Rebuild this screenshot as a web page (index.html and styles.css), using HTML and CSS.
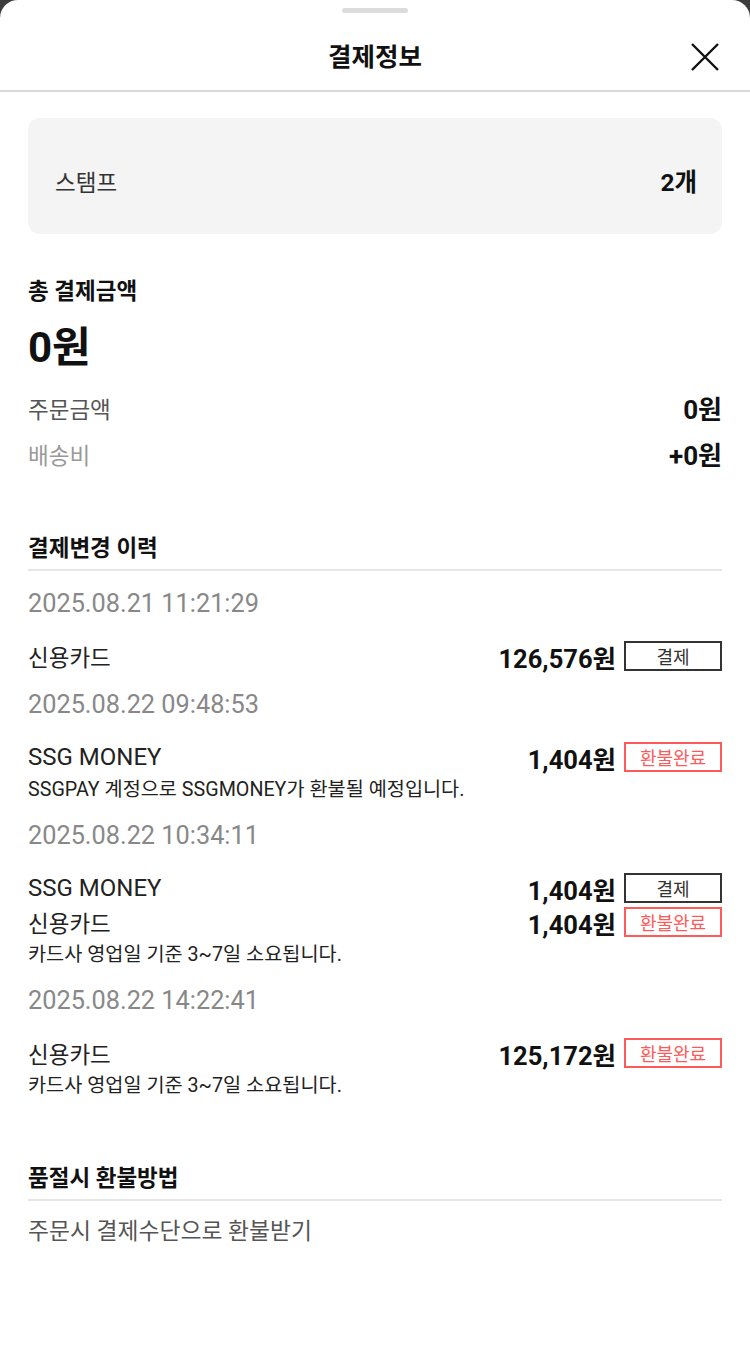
FILE: index.html
```html
<!DOCTYPE html>
<html lang="ko">
<head>
<meta charset="utf-8">
<link rel="stylesheet" href="styles.css">
</head>
<body>
<div class="sheet">
  <header class="header">
    <div class="handle"></div>
    <div class="title-row">
      <h1 class="title">결제정보</h1>
      <button class="close" aria-label="닫기">
        <svg width="28" height="28" viewBox="0 0 28 28"><path d="M1 1 L27 27 M27 1 L1 27" stroke="#111" stroke-width="2.4" fill="none"/></svg>
      </button>
    </div>
  </header>
  <main class="content">
    <div class="stamp-box">
      <span class="stamp-label">스탬프</span>
      <span class="stamp-value">2개</span>
    </div>

    <h2 class="section-title">총 결제금액</h2>
    <div class="total">0원</div>
    <div class="sum-row">
      <span class="sum-label">주문금액</span>
      <span class="sum-value">0원</span>
    </div>
    <div class="sum-row">
      <span class="sum-label light">배송비</span>
      <span class="sum-value">+0원</span>
    </div>

    <h2 class="section-title lined history-title">결제변경 이력</h2>
    <div class="history">
      <div class="group">
        <div class="date">2025.08.21 11:21:29</div>
        <div class="rows">
          <div class="row">
            <span class="method">신용카드</span>
            <span class="amount-wrap"><span class="amount">126,576원</span><span class="badge">결제</span></span>
          </div>
        </div>
      </div>
      <div class="group">
        <div class="date">2025.08.22 09:48:53</div>
        <div class="rows">
          <div class="row">
            <span class="method latin">SSG MONEY</span>
            <span class="amount-wrap"><span class="amount">1,404원</span><span class="badge refund">환불완료</span></span>
          </div>
        </div>
        <p class="desc">SSGPAY 계정으로 SSGMONEY가 환불될 예정입니다.</p>
      </div>
      <div class="group">
        <div class="date">2025.08.22 10:34:11</div>
        <div class="rows">
          <div class="row">
            <span class="method latin">SSG MONEY</span>
            <span class="amount-wrap"><span class="amount">1,404원</span><span class="badge">결제</span></span>
          </div>
          <div class="row">
            <span class="method">신용카드</span>
            <span class="amount-wrap"><span class="amount">1,404원</span><span class="badge refund">환불완료</span></span>
          </div>
        </div>
        <p class="desc">카드사 영업일 기준 3~7일 소요됩니다.</p>
      </div>
      <div class="group">
        <div class="date">2025.08.22 14:22:41</div>
        <div class="rows">
          <div class="row">
            <span class="method">신용카드</span>
            <span class="amount-wrap"><span class="amount">125,172원</span><span class="badge refund">환불완료</span></span>
          </div>
        </div>
        <p class="desc">카드사 영업일 기준 3~7일 소요됩니다.</p>
      </div>
    </div>

    <h2 class="section-title lined refund-title">품절시 환불방법</h2>
    <p class="refund-text">주문시 결제수단으로 환불받기</p>
  </main>
</div>
</body>
</html>
```

FILE: styles.css
```css
* { box-sizing: border-box; }
html, body {
  margin: 0;
  padding: 0;
  height: 100%;
  background: #3d3d3d;
}
body {
  font-family: Roboto, "Noto Sans CJK KR", sans-serif;
  color: #111;
}
.sheet {
  background: #fff;
  min-height: 100%;
  border-radius: 18px 18px 0 0;
}
.header {
  border-bottom: 2px solid #d6dadd;
  padding-top: 8px;
}
.handle {
  width: 66px;
  height: 5px;
  border-radius: 3px;
  background: #dcdcdc;
  margin: 0 auto;
}
.title-row {
  position: relative;
  height: 69px;
  margin-top: 8px;
  display: flex;
  align-items: center;
  justify-content: center;
}
.title {
  margin: 0;
  font-size: 25.5px;
  font-weight: 700;
  line-height: 30px;
  margin-top: 2px;
}
.close {
  position: absolute;
  right: 31px;
  top: 22px;
  width: 28px;
  height: 28px;
  padding: 0;
  border: 0;
  background: none;
  display: block;
}
.close svg { display: block; }
.content {
  padding: 26px 28px 40px;
}
.stamp-box {
  background: #f4f4f4;
  border-radius: 12px;
  height: 116px;
  padding: 50px 25px 36px 27px;
  display: flex;
  justify-content: space-between;
  align-items: center;
}
.stamp-label {
  font-size: 22.5px;
  color: #333;
  line-height: 30px;
}
.stamp-value {
  font-size: 24.5px;
  font-weight: 700;
  line-height: 30px;
}
.section-title {
  margin: 42px 0 0;
  font-size: 22.5px;
  font-weight: 700;
  line-height: 30px;
}
.total {
  margin-top: 17px;
  font-size: 42px;
  font-weight: 700;
  line-height: 50px;
}
.sum-row {
  margin-top: 16px;
  display: flex;
  justify-content: space-between;
  align-items: center;
  line-height: 30px;
}
.total + .sum-row { margin-top: 22px; }
.sum-label {
  font-size: 22.5px;
  color: #555;
}
.sum-label.light { color: #999; }
.sum-value {
  font-size: 26px;
  font-weight: 700;
}
.lined {
  border-bottom: 2px solid #e6e6e6;
  padding-bottom: 6px;
}
.history-title { margin-top: 62px; }
.group { margin-top: 17px; }
.group:first-child { margin-top: 16px; }
.date {
  font-size: 25.3px;
  line-height: 34px;
  color: #888;
}
.rows {
  margin-top: 20px;
  display: flex;
  flex-direction: column;
  gap: 4px;
}
.row {
  display: flex;
  justify-content: space-between;
  align-items: center;
  height: 30px;
}
.method {
  font-size: 22.5px;
  color: #222;
}
.method.latin { font-size: 24px; }
.amount-wrap {
  display: flex;
  align-items: center;
  gap: 8px;
}
.amount {
  font-size: 25.5px;
  font-weight: 700;
}
.badge {
  width: 98px;
  height: 30px;
  border: 2px solid #333;
  display: flex;
  align-items: center;
  justify-content: center;
  font-size: 18px;
  color: #333;
}
.badge.refund {
  border-color: #ff5a5a;
  color: #ff5a5a;
}
.desc {
  margin: 6px 0 0;
  font-size: 19.7px;
  line-height: 24px;
  color: #222;
}
.refund-title { margin-top: 65px; }
.refund-text {
  margin: 16px 0 0;
  font-size: 22.8px;
  line-height: 30px;
  color: #555;
}
```
